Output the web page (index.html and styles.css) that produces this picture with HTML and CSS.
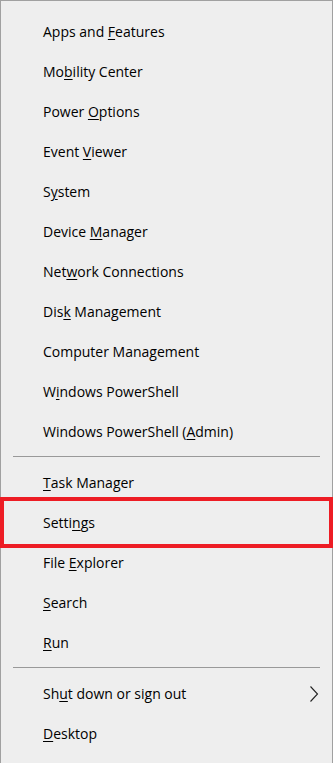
FILE: index.html
```html
<!DOCTYPE html>
<html lang="en">
<head>
    <meta charset="UTF-8">
    <meta name="viewport" content="width=device-width, initial-scale=1.0">
    <title>Quick Link Menu</title>
    <link rel="stylesheet" href="styles.css">
</head>
<body>
    <div class="menu">
        <ul class="menu-group">
            <li class="menu-item"><span>Apps and <u>F</u>eatures</span></li>
            <li class="menu-item"><span>Mo<u>b</u>ility Center</span></li>
            <li class="menu-item"><span>Power <u>O</u>ptions</span></li>
            <li class="menu-item"><span>Event <u>V</u>iewer</span></li>
            <li class="menu-item"><span>S<u>y</u>stem</span></li>
            <li class="menu-item"><span>Device <u>M</u>anager</span></li>
            <li class="menu-item"><span>Net<u>w</u>ork Connections</span></li>
            <li class="menu-item"><span>Dis<u>k</u> Management</span></li>
            <li class="menu-item"><span>Computer Mana<u>g</u>ement</span></li>
            <li class="menu-item"><span>W<u>i</u>ndows PowerShell</span></li>
            <li class="menu-item"><span>Windows PowerShell (<u>A</u>dmin)</span></li>
        </ul>
        <div class="separator"></div>
        <ul class="menu-group">
            <li class="menu-item"><span><u>T</u>ask Manager</span></li>
            <li class="menu-item highlight"><span>Setti<u>n</u>gs</span></li>
            <li class="menu-item"><span>File <u>E</u>xplorer</span></li>
            <li class="menu-item"><span><u>S</u>earch</span></li>
            <li class="menu-item"><span><u>R</u>un</span></li>
        </ul>
        <div class="separator"></div>
        <ul class="menu-group">
            <li class="menu-item">
                <span>Sh<u>u</u>t down or sign out</span>
                <svg class="chevron" width="10" height="16" viewBox="0 0 10 16">
                    <polyline points="1.5,0.5 8.5,8 1.5,15.5" fill="none" stroke="#222" stroke-width="1.1"/>
                </svg>
            </li>
            <li class="menu-item"><span><u>D</u>esktop</span></li>
        </ul>
    </div>
</body>
</html>
```

FILE: styles.css
```css
:root {
    --menu-bg: #eeeeee;
    --menu-border: #a0a0a0;
    --separator: #999999;
    --text-color: #000000;
    --highlight: #ed1c24;
}

* {
    margin: 0;
    padding: 0;
    box-sizing: border-box;
}

body {
    font-family: 'Open Sans', 'Noto Sans', sans-serif;
    background-color: var(--menu-bg);
    color: var(--text-color);
}

.menu {
    width: 333px;
    min-height: 763px;
    padding-top: 11px;
    background-color: var(--menu-bg);
    border: 1px solid var(--menu-border);
    border-bottom: none;
}

.menu-group {
    list-style: none;
}

.menu-item {
    position: relative;
    display: flex;
    align-items: center;
    justify-content: space-between;
    height: 40px;
    padding: 0 12px 0 42px;
    font-size: 14px;
    line-height: 1;
    white-space: nowrap;
}

.menu-item u {
    text-underline-offset: 2px;
}

.chevron {
    display: block;
    margin-right: 1px;
}

.highlight::after {
    content: "";
    position: absolute;
    top: -6px;
    bottom: -5px;
    left: -1px;
    right: -1px;
    border: 4px solid var(--highlight);
}

.separator {
    height: 1px;
    margin: 4px 12px 6px;
    background-color: var(--separator);
}
```
